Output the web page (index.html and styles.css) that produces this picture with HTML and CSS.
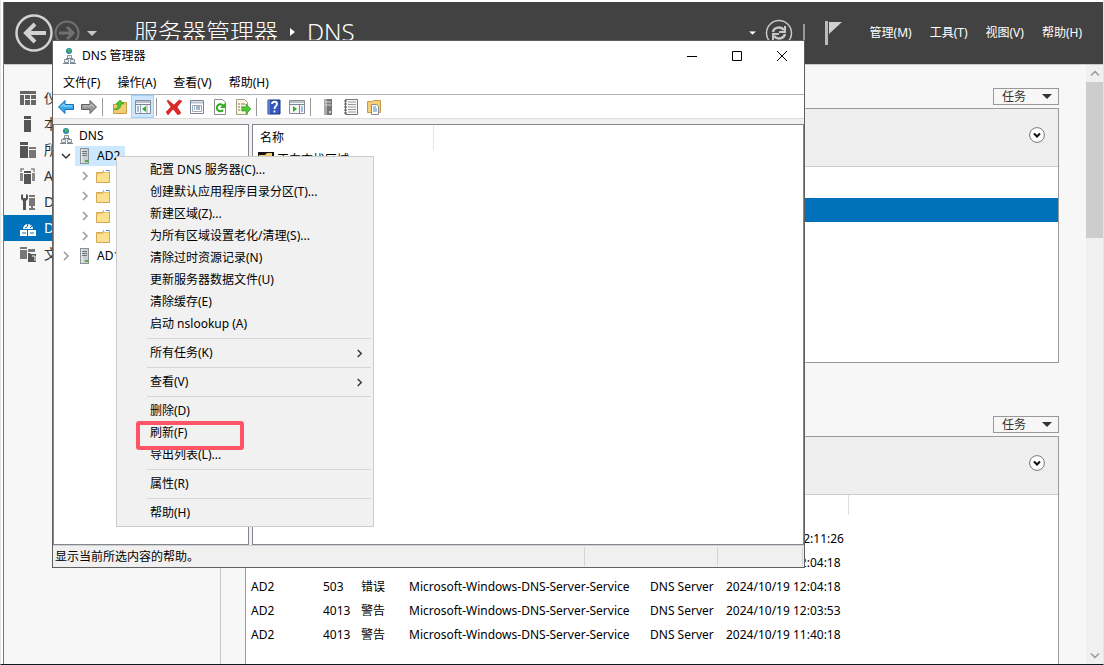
FILE: index.html
```html
<!DOCTYPE html>
<html lang="zh-CN">
<head>
<meta charset="utf-8">
<title>服务器管理器</title>
<link rel="stylesheet" href="styles.css">
</head>
<body>
<svg class="defs" aria-hidden="true">
  <symbol id="server" viewBox="0 0 16 16"><path d="M4 0h9v16H4z" fill="#8b9196"/><path d="M5 1h7v14H5z" fill="#c9ced2"/><path d="M5 1h2v14H5z" fill="#e2e6e9"/><path d="M6 3.500h5M6 5.500h5M6 7.500h5" stroke="#70777c"/><path d="M9 12h3v2H9z" fill="#35c51c"/></symbol>
  <symbol id="folder" viewBox="0 0 16 16"><path d="M1.500 14.500V4.500h6l1-2h6v12z" fill="#edc564" stroke="#d3a855"/><path d="M9 2h5v2H9z" fill="#fff"/><path d="M11 2.500h3" stroke="#3c8fe0"/><path d="M2 6h6l1-1h5v9H2z" fill="#fbe08f"/></symbol>
  <symbol id="dns" viewBox="0 0 16 16"><circle cx="8" cy="3" r="3" fill="#2f80b5"/><path d="M6 1h3l1 2-2 2-1-2z" fill="#45c44a"/><path d="M6.500 7.500h4v3h-4zM3.500 11.500h4v3h-4zM9.500 11.500h4v3h-4z" fill="#e8edf2" stroke="#8a949e"/><path d="M5 10.500h7M2 15.500h6M9 15.500h6" stroke="#78828c"/></symbol>
  <symbol id="right" viewBox="0 0 10 10"><path d="M3 1l4 4-4 4" fill="none" stroke="currentColor" stroke-width="1.500"/></symbol>
  <symbol id="down" viewBox="0 0 10 10"><path d="M1 3l4 4 4-4" fill="none" stroke="currentColor" stroke-width="1.500"/></symbol>
  <symbol id="tri" viewBox="0 0 10 5"><path d="M0 0h10L5 5z" fill="currentColor"/></symbol>
  <symbol id="expand" viewBox="0 0 16 16"><circle cx="8" cy="8" r="7.400" fill="#fff" stroke="#777"/><path d="M5 6.500l3 3 3-3" fill="none" stroke="#111" stroke-width="2"/></symbol>
</svg>

<div class="manager">
  <header class="banner">
    <nav class="history">
      <button class="back" aria-label="后退"><svg viewBox="0 0 38 38"><circle cx="19" cy="19" r="17.500" fill="none" stroke="#d2d2d2" stroke-width="2.500"/><path d="M31 19H10M20 10l-9 9 9 9" fill="none" stroke="#d2d2d2" stroke-width="4"/></svg></button>
      <button class="forward" aria-label="前进"><svg viewBox="0 0 26 26"><circle cx="13" cy="13" r="11.500" fill="none" stroke="#707070" stroke-width="2"/><path d="M5 13h14M13 7l6 6-6 6" fill="none" stroke="#707070" stroke-width="3"/></svg></button>
      <button class="recent" aria-label="历史"><svg viewBox="0 0 10 5"><use href="#tri"/></svg></button>
    </nav>
    <h1 class="crumbs"><span>服务器管理器</span><svg viewBox="0 0 5 8"><path d="M0 0l5 4-5 4z" fill="#fff"/></svg><span>DNS</span></h1>
    <div class="notify">
      <svg class="notify-drop" viewBox="0 0 10 5"><use href="#tri"/></svg>
      <button class="refresh" aria-label="刷新"><svg viewBox="0 0 28 28"><circle cx="14" cy="14" r="12.500" fill="none" stroke="#c8c8c8" stroke-width="1.500"/><path d="M8 13c1-5 8-6 11-2M20 15c-1 5-8 6-11 2" fill="none" stroke="#c8c8c8" stroke-width="2.500"/><path d="M20 7v6h-6M8 21v-6h6" fill="none" stroke="#c8c8c8" stroke-width="2"/></svg></button>
      <span class="bar"></span>
      <button class="flag" aria-label="通知"><svg viewBox="0 0 18 24"><path d="M0 0h3v24H0z" fill="#bbb"/><path d="M4 1h13L4 13z" fill="#d0d0d0"/></svg></button>
    </div>
    <nav class="banner-menu"><button>管理(M)</button><button>工具(T)</button><button>视图(V)</button><button>帮助(H)</button></nav>
  </header>

  <div class="body">
    <nav class="sidebar">
      <a href="#"><svg viewBox="0 0 16 16"><path d="M0 1h16v3H0zM0 5h4v10H0zM5 5h5v4H5zM11 5h5v4h-5zM5 10h5v5H5zM11 10h5v5h-5z" fill="#666"/></svg>仪</a>
      <a href="#"><svg viewBox="0 0 16 16"><path d="M4 0h7v3H4zM4 4h7v12H4z" fill="#555"/></svg>本</a>
      <a href="#"><svg viewBox="0 0 16 16"><path d="M0 0h8v3H0zM0 4h8v12H0z" fill="#555"/><path d="M9 5h7v2H9zM9 8h7v8H9z" fill="#777"/></svg>所</a>
      <a href="#"><svg viewBox="0 0 16 16"><path d="M4 3h7v2H4zM4 6h7v10H4z" fill="#555"/><path d="M4 1H1v3M11 1h3v3" fill="none" stroke="#888" stroke-width="1.500"/><path d="M0 5h3v8H0zM12 5h3v8h-3z" fill="#888"/></svg>A</a>
      <a href="#"><svg viewBox="0 0 16 16"><path d="M1 1v4l2 2v9h3V7l2-2V1L6 0v4H3V0z" fill="#555"/><path d="M9 1h6v2H9zM9 4h6v8H9zM11 12h2v2h-2zM9 14h6v2H9z" fill="#777"/></svg>D</a>
      <a href="#" class="active"><svg viewBox="0 0 16 16"><path d="M3 9a5 5 0 1 1 10 0z" fill="#fff"/><path d="M5 3l3 1-1 3-2 1M9 1l3 3-2 1M10 8l2-2" stroke="#0072bc" fill="none"/><path d="M0 10h7v6H0zM8 10h8v6H8z" fill="#fff"/><path d="M2 13h4M10 13h4" stroke="#0072bc"/></svg>D</a>
      <a href="#"><svg viewBox="0 0 16 16"><path d="M0 1h7v2H0zM0 4h7v9H0zM8 3h7v3H8z" fill="#777"/><path d="M8 7h2l1 1h5v8H8z" fill="#555"/><path d="M12 10h3v5" fill="none" stroke="#fff"/></svg>文</a>
    </nav>
    <main class="content">
      <section class="tile">
        <button class="tasks">任务<svg viewBox="0 0 10 5"><use href="#tri"/></svg></button>
        <div class="panel">
          <div class="panel-head"><button aria-label="展开"><svg viewBox="0 0 16 16"><use href="#expand"/></svg></button></div>
          <div class="selected-row"></div>
        </div>
      </section>
      <section class="tile events">
        <button class="tasks">任务<svg viewBox="0 0 10 5"><use href="#tri"/></svg></button>
        <div class="panel">
          <div class="panel-head"><button aria-label="展开"><svg viewBox="0 0 16 16"><use href="#expand"/></svg></button></div>
          <div class="column-edge"></div>
          <table>
            <colgroup><col class="c-name"><col class="c-id"><col class="c-level"><col class="c-source"><col class="c-log"><col class="c-date"></colgroup>
            <tr><td></td><td></td><td></td><td></td><td></td><td class="late">2:11:26</td></tr>
            <tr><td></td><td></td><td>错误</td><td></td><td></td><td>2024/10/19 12:04:18</td></tr>
            <tr><td>AD2</td><td>503</td><td>错误</td><td>Microsoft-Windows-DNS-Server-Service</td><td>DNS Server</td><td>2024/10/19 12:04:18</td></tr>
            <tr><td>AD2</td><td>4013</td><td>警告</td><td>Microsoft-Windows-DNS-Server-Service</td><td>DNS Server</td><td>2024/10/19 12:03:53</td></tr>
            <tr><td>AD2</td><td>4013</td><td>警告</td><td>Microsoft-Windows-DNS-Server-Service</td><td>DNS Server</td><td>2024/10/19 11:40:18</td></tr>
          </table>
        </div>
      </section>
    </main>
    <div class="scrollbar"><svg viewBox="0 0 10 10"><path d="M1 7l4-4 4 4" fill="none" stroke="#999" stroke-width="1.500"/></svg><span class="thumb"></span><svg viewBox="0 0 10 10"><use href="#down"/></svg></div>
  </div>
</div>

<div class="window">
  <div class="titlebar">
    <svg class="i16" viewBox="0 0 16 16"><use href="#dns"/></svg><span class="title">DNS 管理器</span>
    <div class="controls">
      <button aria-label="最小化"><svg viewBox="0 0 12 12"><path d="M1 6.500h10" stroke="#000"/></svg></button>
      <button aria-label="最大化"><svg viewBox="0 0 12 12"><path d="M1.500 1.500h9v9h-9z" stroke="#000" fill="none"/></svg></button>
      <button aria-label="关闭"><svg viewBox="0 0 12 12"><path d="M1 1l10 10M11 1L1 11" stroke="#000"/></svg></button>
    </div>
  </div>
  <nav class="menubar"><button>文件(F)</button><button>操作(A)</button><button>查看(V)</button><button>帮助(H)</button></nav>
  <div class="toolbar">
    <button aria-label="后退"><svg viewBox="0 0 16 16"><path d="M.5 8L7 1.500v4h8.500v5H7v4z" fill="#3ba9ea" stroke="#1b6fb8"/><path d="M3 8l3-3v2h8" stroke="#9be0fb" fill="none"/></svg></button>
    <button aria-label="前进"><svg viewBox="0 0 16 16"><path d="M15.500 8L9 1.500v4H.5v5H9v4z" fill="#999" stroke="#606060"/><path d="M2 7h8V5l3 3" stroke="#c2c2c2" fill="none"/></svg></button>
    <span class="sep"></span>
    <button aria-label="上一级"><svg viewBox="0 0 16 16"><path d="M1.500 5.500h6l1-2h6v11h-13z" fill="#f2cc72" stroke="#c79b45"/><path d="M2 10c4 0 4-3 4-5H4l4-4 4 4H9c0 4-3 7-7 5z" fill="#4dc52c" stroke="#2f9218" stroke-width=".6"/></svg></button>
    <button class="on" aria-label="显示树"><svg viewBox="0 0 16 16"><path d="M.5 1.500h15v13H.5z" fill="#f7f8fa" stroke="#858c98"/><path d="M1 3h14M1 5.500h14" stroke="#7c8796"/><path d="M5.500 6v8M12 6v8" stroke="#9ba6b4"/><path d="M2 8h2M2 10h2M2 12h2" stroke="#497ebd"/><path d="M11 7v6L7 10z" fill="#32ad1d"/></svg></button>
    <span class="sep"></span>
    <button aria-label="删除"><svg viewBox="0 0 16 16"><path d="M2 1l6 5 5-5 3 1-5 6 4 6-3 2-5-6-5 6-2-3 5-5-4-6z" fill="#df2926" stroke="#a61313" stroke-width=".5"/></svg></button>
    <button aria-label="属性"><svg viewBox="0 0 16 16"><path d="M1.500 1.500h13v13h-13z" fill="#fff" stroke="#788492"/><path d="M2 3.500h12" stroke="#b6c2cf" stroke-width="2"/><path d="M3.500 6.500h9v6h-9z" fill="none" stroke="#9daab6"/><path d="M5 8h1M7 8h4M5 10h1M7 10h4" stroke="#416a98"/></svg></button>
    <button aria-label="刷新"><svg viewBox="0 0 16 16"><path d="M2.500.5h8l3 3v12h-11z" fill="#fff" stroke="#8b8b8b"/><path d="M11 6.500a3.500 3.500 0 1 0 0 4.500" fill="none" stroke="#30ad20" stroke-width="2"/><path d="M13 4v5H8z" fill="#30ad20"/></svg></button>
    <button aria-label="导出"><svg viewBox="0 0 16 16"><path d="M1.500.5h8l3 3v12h-11z" fill="#fff8de" stroke="#9f9f83"/><path d="M3 5h2M6 5h4M3 8h2M6 8h3M3 11h2M6 11h2" stroke="#777"/><path d="M7 8h4V5l5 5-5 5v-3H7z" fill="#52c738" stroke="#2d9425" stroke-width=".6"/></svg></button>
    <span class="sep"></span>
    <button aria-label="帮助"><svg viewBox="0 0 16 16"><path d="M2 1h12v14H2z" fill="#3458bd" stroke="#1e337e"/><path d="M3 1v14" stroke="#88a4e8"/><path d="M6 5c0-3 5-3 5 0 0 2-2.500 2-2.500 5M8.500 11.500v2" fill="none" stroke="#fff" stroke-width="1.800"/></svg></button>
    <button aria-label="操作窗格"><svg viewBox="0 0 16 16"><path d="M.5 1.500h15v13H.5z" fill="#f7f8fa" stroke="#858c98"/><path d="M1 3h14M1 5.500h14M10.500 6v8" stroke="#7c8796"/><path d="M12 8h2M12 10h2M12 12h2" stroke="#497ebd"/><path d="M4 7v6l4-3z" fill="#32ad1d"/></svg></button>
    <span class="sep"></span>
    <button aria-label="服务器"><svg viewBox="0 0 16 16"><path d="M4 0h8v16H4z" fill="#777"/><path d="M4 0h3v16H4z" fill="#aaa"/><path d="M5 3h6M5 6h6" stroke="#ddd"/><path d="M9 12h2v2H9z" fill="#bce5ac"/></svg></button>
    <button aria-label="记录"><svg viewBox="0 0 16 16"><path d="M2.500.5h12v15h-12z" fill="#f8f8f8" stroke="#777"/><path d="M5 3h8M5 5.500h8M5 8h8M5 10.500h8M5 13h8" stroke="#999"/><path d="M1 2h3M1 5h3M1 8h3M1 11h3M1 14h3" stroke="#555"/></svg></button>
    <button aria-label="新建区域"><svg viewBox="0 0 16 16"><path d="M1.500 13.500v-11h5l1-1h7v12z" fill="#f5cf78" stroke="#c99a45"/><path d="M5.500 5.500h5l2 2v8h-7z" fill="#fff" stroke="#8a8a8a"/><path d="M7 8h3M7 10h4M7 12h4" stroke="#4f86c0"/></svg></button>
  </div>
  <div class="panes">
    <ul class="tree">
      <li><svg class="i16" viewBox="0 0 16 16"><use href="#dns"/></svg><span>DNS</span></li>
      <li class="node open"><svg class="chev" viewBox="0 0 10 10"><use href="#down"/></svg><span class="pick"><svg class="i16" viewBox="0 0 16 16"><use href="#server"/></svg><span>AD2</span></span></li>
      <li class="leaf"><svg class="chev" viewBox="0 0 10 10"><use href="#right"/></svg><svg class="i16" viewBox="0 0 16 16"><use href="#folder"/></svg></li>
      <li class="leaf"><svg class="chev" viewBox="0 0 10 10"><use href="#right"/></svg><svg class="i16" viewBox="0 0 16 16"><use href="#folder"/></svg></li>
      <li class="leaf"><svg class="chev" viewBox="0 0 10 10"><use href="#right"/></svg><svg class="i16" viewBox="0 0 16 16"><use href="#folder"/></svg></li>
      <li class="leaf"><svg class="chev" viewBox="0 0 10 10"><use href="#right"/></svg><svg class="i16" viewBox="0 0 16 16"><use href="#folder"/></svg></li>
      <li class="node"><svg class="chev" viewBox="0 0 10 10"><use href="#right"/></svg><span class="plain"><svg class="i16" viewBox="0 0 16 16"><use href="#server"/></svg><span>AD1</span></span></li>
    </ul>
    <div class="list">
      <div class="list-head"><span>名称</span></div>
      <div class="list-row"><svg class="i16" viewBox="0 0 16 16"><path d="M0 0h16v16H0z" fill="#111"/><path d="M1 14V3h6l2-2h5v13z" fill="#f3cf78"/></svg><span>正向查找区域</span></div>
    </div>
  </div>
  <footer class="status"><span>显示当前所选内容的帮助。</span><span></span><span></span></footer>
</div>

<div class="context" role="menu">
  <button role="menuitem">配置 DNS 服务器(C)...</button>
  <button role="menuitem">创建默认应用程序目录分区(T)...</button>
  <button role="menuitem">新建区域(Z)...</button>
  <button role="menuitem">为所有区域设置老化/清理(S)...</button>
  <button role="menuitem">清除过时资源记录(N)</button>
  <button role="menuitem">更新服务器数据文件(U)</button>
  <button role="menuitem">清除缓存(E)</button>
  <button role="menuitem">启动 nslookup (A)</button>
  <hr>
  <button role="menuitem">所有任务(K)<svg viewBox="0 0 10 10"><use href="#right"/></svg></button>
  <hr>
  <button role="menuitem">查看(V)<svg viewBox="0 0 10 10"><use href="#right"/></svg></button>
  <hr>
  <button role="menuitem">删除(D)</button>
  <button role="menuitem" class="marked">刷新(F)</button>
  <button role="menuitem">导出列表(L)...</button>
  <hr>
  <button role="menuitem">属性(R)</button>
  <hr>
  <button role="menuitem">帮助(H)</button>
</div>
</body>
</html>
```
FILE: styles.css
```css
*, *::after { box-sizing: border-box; }
body {
  margin: 0;
  height: 100vh;
  overflow: hidden;
  position: relative;
  background: #fff;
  color: #000;
  font: 12px/20px "Noto Sans", "Noto Sans CJK SC", sans-serif;
}
button { margin: 0; padding: 0; border: 0; background: none; font: inherit; color: inherit; white-space: nowrap; }
svg { display: block; flex: none; }
.defs { position: absolute; width: 0; height: 0; }
.i16 { width: 16px; height: 16px; }

/* Server manager */
.manager {
  height: 100vh;
  display: flex;
  flex-direction: column;
  border-left: 1px solid #e4e4e4;
  border-right: 1px solid #e4e4e4;
  border-bottom: 1px solid #0a1a24;
  padding: 2px 0 0 2px;
}
.banner {
  flex: none;
  height: 63px;
  display: flex;
  align-items: center;
  padding: 0 21px 0 11px;
  background: #424242;
  color: #fff;
  border-left: 1px solid #777;
  border-bottom: 1px solid #ccc;
}
.history { display: flex; align-items: center; gap: 1px; width: 119px; }
.back svg { width: 38px; height: 38px; }
.forward svg { width: 26px; height: 26px; }
.recent { margin-left: 6px; color: #c8c8c8; }
.recent svg { width: 10px; height: 5px; }
.crumbs {
  flex: 1;
  display: flex;
  align-items: center;
  gap: 12px;
  margin: 0;
  padding-bottom: 2px;
  font-size: 24px;
  font-weight: 300;
  line-height: 32px;
}
.crumbs svg { width: 5px; height: 8px; }
.notify { display: flex; align-items: center; }
.notify-drop { width: 7px; height: 4px; margin-right: 9px; }
.refresh svg { width: 28px; height: 28px; }
.bar { width: 2px; height: 18px; margin: 0 20px 0 10px; background: #999; }
.flag svg { width: 18px; height: 24px; }
.banner-menu { display: flex; gap: 18px; margin-left: 27px; }
.body { flex: 1; min-height: 0; display: flex; border-left: 1px solid #777; background: #f7f7f7; }
.sidebar { width: 217px; flex: none; padding-top: 20px; border-right: 1px solid #c8c8c8; }
.sidebar a {
  display: flex;
  align-items: center;
  gap: 8px;
  height: 26px;
  padding-left: 16px;
  color: #333;
  font-size: 14px;
  text-decoration: none;
}
.sidebar svg { width: 16px; height: 16px; }
.sidebar .active { background: #0072bc; color: #fff; }
.content { flex: 1; min-width: 0; display: flex; flex-direction: column; gap: 53px; padding: 23px 27px 0 24px; }
.tile { display: flex; flex-direction: column; align-items: stretch; gap: 3px; }
.events { flex: 1; min-height: 0; }
.tasks {
  align-self: flex-end;
  display: flex;
  align-items: center;
  justify-content: space-between;
  width: 66px;
  height: 17px;
  padding: 0 6px 0 8px;
  border: 1px solid #999;
  color: #333;
}
.tasks svg { width: 10px; height: 5px; }
.panel { height: 255px; border: 1px solid #999; background: #fff; overflow: hidden; }
.events .panel { flex: 1; border-bottom: 0; }
.panel-head { display: flex; justify-content: flex-end; align-items: flex-start; height: 58px; padding: 18px 13px 0 0; background: #efefef; border-bottom: 1px solid #ccc; }
.panel-head svg { width: 16px; height: 16px; }
.selected-row { height: 24px; margin-top: 31px; background: #0072bc; }
.column-edge { width: 603px; height: 20px; margin-bottom: 12px; border-right: 1px solid #ddd; }
.events table { border-collapse: collapse; table-layout: fixed; width: 603px; }
.events td { height: 24px; padding: 0 0 0 5px; white-space: nowrap; }
.events .late { text-align: right; padding-right: 5px; }
.c-name { width: 72px; }
.c-id { width: 38px; }
.c-level { width: 48px; }
.c-source { width: 241px; }
.c-log { width: 76px; }
.c-date { width: 128px; }
.scrollbar { width: 17px; flex: none; display: flex; flex-direction: column; align-items: center; background: #f0f0f0; color: #999; }
.scrollbar svg { width: 10px; height: 17px; }
.thumb { width: 17px; height: 156px; margin-bottom: auto; background: #cdcdcd; }

/* Console window */
.window {
  position: absolute;
  left: 52px;
  top: 40px;
  width: 753px;
  height: 528px;
  display: flex;
  flex-direction: column;
  background: #fff;
  border: 1px solid #5f5f5f;
}
.titlebar { display: flex; align-items: center; height: 30px; padding-left: 8px; gap: 5px; }
.controls { display: flex; margin-left: auto; }
.controls button { display: flex; align-items: center; justify-content: center; width: 45px; height: 28px; }
.controls svg { width: 12px; height: 12px; }
.menubar { display: flex; align-items: center; gap: 17px; height: 24px; padding-left: 10px; border-bottom: 1px solid #b0b0b0; }
.toolbar { display: flex; align-items: center; height: 24px; padding-left: 1px; border-bottom: 1px solid #ddd; }
.toolbar button { display: flex; align-items: center; justify-content: center; width: 23px; height: 23px; }
.toolbar .on { background: #cce8ff; border: 1px solid #99d1ff; }
.toolbar svg { width: 16px; height: 16px; }
.sep { width: 1px; height: 18px; margin: 0 5px 0 2px; background: #999; }
.panes { flex: 1; min-height: 0; display: flex; gap: 3px; padding-top: 5px; background: #f0f0f0; }
.tree { width: 196px; margin: 0; padding: 1px 0 0; list-style: none; background: #fff; border: 1px solid #828790; }
.tree li { display: flex; align-items: center; height: 20px; }
.tree li > .i16 { margin: 0 5px 0 4px; }
.chev { width: 10px; height: 10px; color: #999; }
.node { padding-left: 7px; }
.open .chev { color: #333; }
.leaf { padding-left: 26px; }
.tree .leaf .i16 { margin: 0 0 0 5px; }
.pick, .plain { display: flex; align-items: center; gap: 5px; height: 20px; margin-left: 4px; padding: 0 5px 0 1px; }
.pick { background: #cce8ff; }
.list { flex: 1; background: #fff; border: 1px solid #828790; }
.list-head { display: flex; align-items: center; width: 181px; height: 25px; padding-left: 7px; border-right: 1px solid #e5e5e5; }
.list-row { display: flex; align-items: center; gap: 3px; height: 20px; padding-left: 5px; }
.status { display: flex; height: 22px; border-top: 1px solid #d0d0d0; background: #f0f0f0; }
.status span { width: 133px; margin: 1px 0; border-right: 1px solid #d5d5d5; }
.status span:first-child { flex: 1; padding-left: 2px; }
.status span:last-child { width: 85px; margin-right: 1px; }

/* Context menu */
.context {
  position: absolute;
  left: 116px;
  top: 156px;
  width: 258px;
  padding: 2px;
  display: flex;
  flex-direction: column;
  background: #f1f1f1;
  border: 1px solid #ccc;
}
.context button { position: relative; display: flex; align-items: center; justify-content: space-between; height: 22px; padding: 0 7px 0 31px; text-align: left; }
.context svg { width: 9px; height: 9px; color: #333; }
.context hr { align-self: stretch; height: 1px; margin: 3px 0 3px 28px; border: 0; background: #d5d5d5; }
.context .marked { z-index: 1; }
.marked::after {
  content: "";
  position: absolute;
  left: 17px;
  top: -1px;
  width: 108px;
  height: 29px;
  border: 4px solid #ff5566;
  border-radius: 3px;
}
```
